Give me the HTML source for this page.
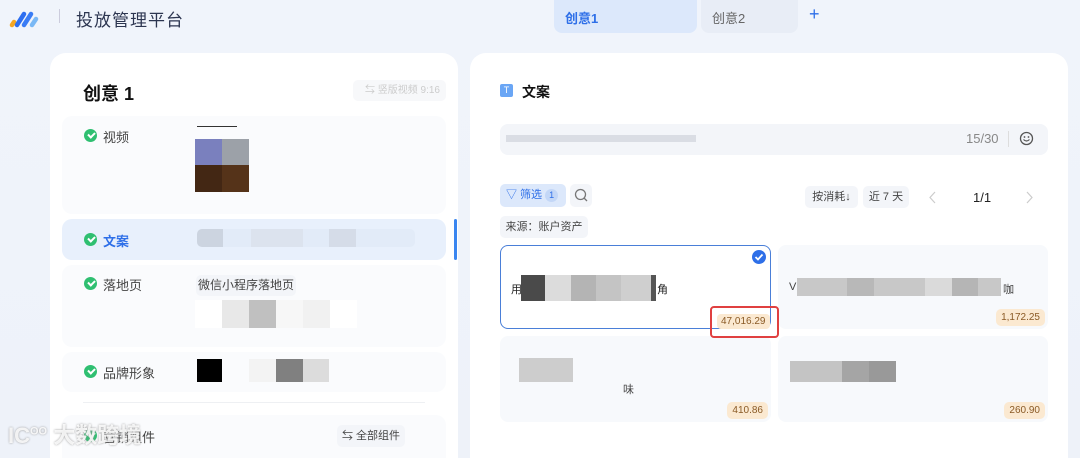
<!DOCTYPE html>
<html style="height:458px;overflow:hidden"><head><meta charset="utf-8"><style>
*{margin:0;padding:0;box-sizing:border-box}
body{width:1080px;height:458px;overflow:hidden;background:linear-gradient(180deg,#f0f4fb,#eef2f9);font-family:"Liberation Sans","Noto Sans CJK SC",sans-serif;position:relative;color:#222}
.a{position:absolute}
.panel{background:#fff;border-radius:16px 16px 0 0}
.row{background:#fafbfd;border-radius:10px;left:62px;width:384px}
.lbl{font-size:13px;color:#444}
.ck{width:13px;height:13px;border-radius:50%;background:#2fbf71;display:inline-block}
.ck:after{content:"";position:absolute;left:3.5px;top:3px;width:5px;height:3px;border-left:2px solid #fff;border-bottom:2px solid #fff;transform:rotate(-45deg)}
.px{position:absolute;height:100%}
.card{background:#f7f9fc;border-radius:8px}
.amt{position:absolute;right:3px;bottom:3px;background:#fbe9d1;color:#8a5a25;font-size:10px;padding:3px 5px;border-radius:5px}
.chip{background:#f3f5f9;border-radius:5px;font-size:11px;color:#444;text-align:center}
</style></head><body>
<svg class="a" style="left:9px;top:10px" width="34" height="18" viewBox="0 0 34 18"><g stroke-linecap="round" stroke-width="4.5"><line x1="3" y1="15" x2="5" y2="12" stroke="#f5a623"/><line x1="8" y1="15" x2="15" y2="4" stroke="#2d6ef0"/><line x1="15" y1="15" x2="22" y2="4" stroke="#3a7cf5"/><line x1="23" y1="15" x2="27" y2="9" stroke="#7ab8f5"/></g></svg>
<div class="a" style="left:59px;top:9px;width:1px;height:14px;background:#ccd"></div>
<div class="a" style="left:76px;top:6px;font-size:17px;color:#2c3550;letter-spacing:1px">投放管理平台</div>
<div class="a" style="left:554px;top:0;width:143px;height:33px;background:#dce8fb;border-radius:0 0 8px 8px"></div>
<div class="a" style="left:565px;top:8px;font-size:13px;color:#2e6fe8;font-weight:bold">创意1</div>
<div class="a" style="left:701px;top:0;width:97px;height:33px;background:#e8edf6;border-radius:0 0 8px 8px"></div>
<div class="a" style="left:712px;top:8px;font-size:13px;color:#666">创意2</div>
<div class="a" style="left:809px;top:4px;font-size:18px;color:#2e6fe8">+</div>

<div class="a panel" style="left:50px;top:53px;width:408px;height:405px"></div>
<div class="a" style="left:83px;top:80px;font-size:18px;font-weight:bold;color:#111">创意 1</div>
<div class="a" style="left:353px;top:80px;width:93px;height:21px;background:#f7f8fa;border-radius:5px;font-size:10px;color:#ccc;line-height:21px;text-align:right;padding-right:6px">⇆ 竖版视频 9:16</div>

<div class="a row" style="top:116px;height:98px"></div>
<div class="a ck" style="left:84px;top:129px"></div>
<div class="a lbl" style="left:103px;top:127px">视频</div>
<div class="a" style="left:197px;top:126px;width:40px;height:1px;background:#333"></div>
<div class="a" style="left:195px;top:139px;width:27px;height:26px;background:#7a80be"></div>
<div class="a" style="left:222px;top:139px;width:27px;height:26px;background:#9ca1a8"></div>
<div class="a" style="left:195px;top:165px;width:27px;height:27px;background:#432714"></div>
<div class="a" style="left:222px;top:165px;width:27px;height:27px;background:#553319"></div>

<div class="a row" style="top:219px;height:41px;background:#e8f0fc"></div>
<div class="a" style="left:454px;top:219px;width:3px;height:41px;background:#3a86f0;border-radius:2px"></div>
<div class="a ck" style="left:84px;top:233px"></div>
<div class="a lbl" style="left:103px;top:231px;color:#2e6fe8;font-weight:bold">文案</div>
<div class="a" style="left:197px;top:229px;width:218px;height:18px;background:#e2ebf8;border-radius:5px;overflow:hidden"><div class="px" style="left:0;width:26px;background:#ccd4e0"></div><div class="px" style="left:54px;width:52px;background:#dce3ee"></div><div class="px" style="left:132px;width:27px;background:#d5dce8"></div></div>

<div class="a row" style="top:265px;height:82px"></div>
<div class="a ck" style="left:84px;top:277px"></div>
<div class="a lbl" style="left:103px;top:275px">落地页</div>
<div class="a chip" style="left:196px;top:275px;width:100px;height:21px;line-height:21px;font-size:12px">微信小程序落地页</div>
<div class="a" style="left:195px;top:300px;width:162px;height:28px;background:#fff"><div class="px" style="left:27px;width:27px;background:#e8e8e8"></div><div class="px" style="left:54px;width:27px;background:#c0c0c0"></div><div class="px" style="left:81px;width:27px;background:#f7f7f7"></div><div class="px" style="left:108px;width:27px;background:#f1f1f1"></div></div>

<div class="a row" style="top:352px;height:40px"></div>
<div class="a ck" style="left:84px;top:365px"></div>
<div class="a lbl" style="left:103px;top:363px">品牌形象</div>
<div class="a" style="left:197px;top:359px;width:132px;height:23px"><div class="px" style="left:0;width:25px;background:#000"></div><div class="px" style="left:52px;width:27px;background:#f3f3f3"></div><div class="px" style="left:79px;width:27px;background:#808080"></div><div class="px" style="left:106px;width:26px;background:#dcdcdc"></div></div>
<div class="a" style="left:83px;top:402px;width:342px;height:1px;background:#eef0f3"></div>
<div class="a row" style="top:415px;height:43px;border-radius:10px 10px 0 0"></div>
<div class="a ck" style="left:84px;top:429px"></div>
<div class="a lbl" style="left:103px;top:427px">营销组件</div>
<div class="a chip" style="left:337px;top:425px;width:68px;height:22px;line-height:22px">⇆ 全部组件</div>
<div class="a" style="left:8px;top:418px;font-size:22px;color:rgba(255,255,255,.85);font-weight:bold;text-shadow:0 0 2px #999">IC<sup style="font-size:11px">OO</sup> 大数跨境</div>

<div class="a panel" style="left:470px;top:53px;width:598px;height:405px"></div>
<div class="a" style="left:500px;top:84px;width:13px;height:13px;background:#6aa6f5;border-radius:2px;color:#fff;font-size:9px;text-align:center;line-height:13px">T</div>
<div class="a" style="left:522px;top:82px;font-size:14px;font-weight:bold;color:#111">文案</div>
<div class="a" style="left:500px;top:124px;width:548px;height:31px;background:#f3f5f9;border-radius:8px"></div>
<div class="a" style="left:506px;top:135px;width:190px;height:7px;background:#cfd3db;opacity:.7"></div>
<div class="a" style="left:966px;top:131px;font-size:13px;color:#888">15/30</div>
<div class="a" style="left:1008px;top:131px;width:1px;height:16px;background:#ddd"></div>
<svg class="a" style="left:1019px;top:131px" width="15" height="15" viewBox="0 0 15 15"><circle cx="7.5" cy="7.5" r="6" fill="none" stroke="#555" stroke-width="1.3"/><circle cx="5.5" cy="6" r=".9" fill="#555"/><circle cx="9.5" cy="6" r=".9" fill="#555"/><path d="M4.5 8.5 Q7.5 11.5 10.5 8.5" fill="none" stroke="#555" stroke-width="1.2"/></svg>

<div class="a" style="left:500px;top:184px;width:66px;height:23px;background:#dce8fb;border-radius:5px;font-size:11px;color:#2e6fe8;line-height:23px;padding-left:6px">▽ 筛选 <span style="display:inline-block;width:13px;height:13px;border-radius:50%;background:#c3d7f7;text-align:center;line-height:13px;font-size:9px">1</span></div>
<div class="a" style="left:570px;top:184px;width:22px;height:23px;background:#f3f5f9;border-radius:5px"></div>
<svg class="a" style="left:574px;top:188px" width="15" height="15" viewBox="0 0 15 15"><circle cx="6.5" cy="6.5" r="5" fill="none" stroke="#777" stroke-width="1.3"/><line x1="10" y1="10" x2="13" y2="13" stroke="#777" stroke-width="1.3"/></svg>
<div class="a chip" style="left:805px;top:186px;width:53px;height:22px;line-height:22px">按消耗↓</div>
<div class="a chip" style="left:863px;top:186px;width:46px;height:22px;line-height:22px">近 7 天</div>
<svg class="a" style="left:929px;top:191px" width="8" height="13"><path d="M6 1 L1 6.5 L6 12" fill="none" stroke="#ccc" stroke-width="1.2"/></svg>
<div class="a" style="left:973px;top:190px;font-size:13px;color:#222">1/1</div>
<svg class="a" style="left:1025px;top:191px" width="8" height="13"><path d="M2 1 L7 6.5 L2 12" fill="none" stroke="#ccc" stroke-width="1.2"/></svg>
<div class="a chip" style="left:500px;top:216px;width:88px;height:22px;line-height:22px">来源：账户资产</div>

<div class="a card" style="left:500px;top:245px;width:271px;height:84px;background:#fff;border:1px solid #4a7fd8"></div>
<svg class="a" style="left:751px;top:249px" width="16" height="16" viewBox="0 0 16 16"><circle cx="8" cy="8" r="7" fill="#2e6fe8"/><path d="M4.5 8 L7 10.5 L11.5 5.5" fill="none" stroke="#fff" stroke-width="1.8"/></svg>
<div class="a" style="left:511px;top:281px;font-size:11px">用</div>
<div class="a" style="left:521px;top:275px;width:136px;height:26px"><div class="px" style="left:0;width:24px;background:#4a4a4a"></div><div class="px" style="left:24px;width:26px;background:#dcdcdc"></div><div class="px" style="left:50px;width:25px;background:#b4b4b4"></div><div class="px" style="left:75px;width:25px;background:#c4c4c4"></div><div class="px" style="left:100px;width:30px;background:#cfcfcf"></div><div class="px" style="left:130px;width:5px;background:#555"></div></div>
<div class="a" style="left:657px;top:281px;font-size:11px">角</div>
<div class="a" style="left:717px;top:314px;font-size:10px;color:#8a5a25;background:#fbe9d1;padding:2px 4px;border-radius:4px">47,016.29</div>

<div class="a card" style="left:778px;top:245px;width:270px;height:84px"><div class="amt">1,172.25</div></div>
<div class="a" style="left:789px;top:281px;font-size:11px;color:#444">V</div>
<div class="a" style="left:797px;top:278px;width:204px;height:18px"><div class="px" style="left:0;width:100%;background:#c8c8c8"></div><div class="px" style="left:50px;width:27px;background:#b8b8b8"></div><div class="px" style="left:128px;width:27px;background:#dadada"></div><div class="px" style="left:155px;width:26px;background:#b5b5b5"></div></div>
<div class="a" style="left:1003px;top:281px;font-size:11px;color:#444">咖</div>

<div class="a card" style="left:500px;top:336px;width:271px;height:86px"><div class="amt">410.86</div></div>
<div class="a" style="left:519px;top:358px;width:54px;height:24px;background:#cdcdcd"></div>
<div class="a" style="left:623px;top:381px;font-size:11px;color:#444">味</div>
<div class="a card" style="left:778px;top:336px;width:270px;height:86px"><div class="amt">260.90</div></div>
<div class="a" style="left:790px;top:361px;width:106px;height:21px;background:#c4c4c4"><div class="px" style="left:52px;width:27px;background:#a5a5a5"></div><div class="px" style="left:79px;width:27px;background:#999"></div></div>
<div class="a" style="left:710px;top:306px;width:69px;height:32px;border:2px solid #e04040;border-radius:4px;z-index:5"></div>
</body></html>
